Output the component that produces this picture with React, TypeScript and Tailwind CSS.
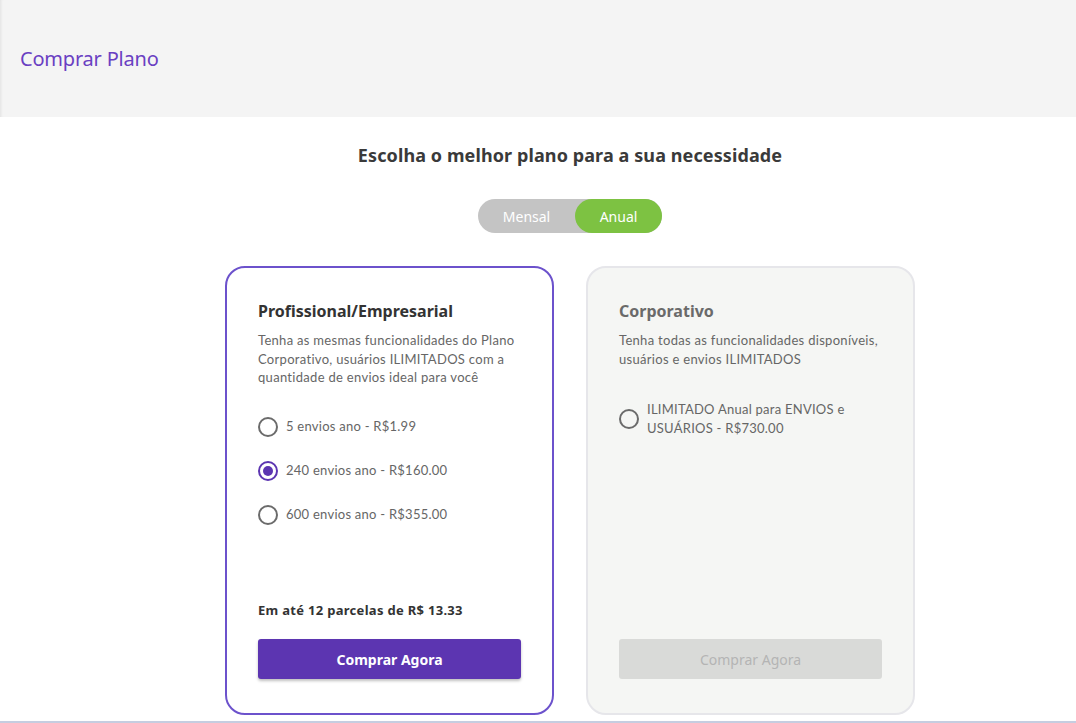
import { useState } from "react";

const font = { fontFamily: "'Noto Sans', Lato, sans-serif" };
const body = { fontFamily: "Lato, 'Noto Sans', sans-serif" };

interface option {
  id: string;
  label: string;
}

const proOptions: option[] = [
  { id: "5", label: "5 envios ano - R$1.99" },
  { id: "240", label: "240 envios ano - R$160.00" },
  { id: "600", label: "600 envios ano - R$355.00" },
];

function Radio({ checked }: { checked: boolean }) {
  return (
    <span
      className={`w-5 h-5 shrink-0 rounded-full border-2 flex items-center justify-center ${
        checked ? "border-[#5c35b1]" : "border-[#6b6b6b]"
      }`}
    >
      {checked && <span className="w-[10px] h-[10px] rounded-full bg-[#5c35b1]"></span>}
    </span>
  );
}

export default function App() {
  const [anual, setAnual] = useState(true);
  const [selected, setSelected] = useState("240");

  return (
    <div className="min-h-[723px] bg-white flex flex-col text-[#333]" style={font}>
      {/* Header */}
      <div className="h-[117px] bg-[#f4f4f4] flex items-center px-5 shadow-[inset_3px_0_3px_-2px_rgba(0,0,0,0.08)]">
        <h1 className="text-[20px] text-[#6a3fc2] tracking-[-0.2px]">Comprar Plano</h1>
      </div>

      <div className="flex flex-col items-center pl-[64px]">
        <h2 className="mt-[26px] text-[18px] font-bold text-[#3a3a3a] leading-[24px] tracking-[0.1px]">
          Escolha o melhor plano para a sua necessidade
        </h2>

        {/* Toggle */}
        <div className="mt-[32px] flex h-[34px] w-[184px] rounded-full bg-[#c4c4c4] text-white text-[14px]">
          <button
            className={`w-[97px] rounded-full ${!anual ? "bg-[#7dc242]" : ""}`}
            onClick={() => setAnual(false)}
          >
            Mensal
          </button>
          <button
            className={`flex-1 rounded-full ${anual ? "bg-[#7dc242]" : ""}`}
            onClick={() => setAnual(true)}
          >
            Anual
          </button>
        </div>

        {/* Cards */}
        <div className="mt-[33px] flex gap-8">
          <div className="w-[329px] h-[449px] rounded-[20px] border-2 border-[#6c52cc] bg-white px-[31px] pt-[32px] pb-[34px] flex flex-col">
            <h3 className="text-[16px] font-bold text-[#333] leading-[22px]">Profissional/Empresarial</h3>
            <p className="mt-[9px] text-[13px] leading-[18.5px] text-[#666] tracking-[0.3px]" style={body}>
              Tenha as mesmas funcionalidades do Plano Corporativo, usuários ILIMITADOS com a quantidade de envios ideal para você
            </p>
            <div className="mt-[30px] flex flex-col gap-[24px]">
              {proOptions.map((o) => (
                <label
                  key={o.id}
                  className="flex items-center gap-2 cursor-pointer h-[20px]"
                  onClick={() => setSelected(o.id)}
                >
                  <Radio checked={selected === o.id} />
                  <span className="text-[13px] text-[#666] tracking-[0.25px]" style={body}>
                    {o.label}
                  </span>
                </label>
              ))}
            </div>
            <div className="flex-1"></div>
            <p className="text-[13px] font-bold text-[#333] tracking-[0.3px]">Em até 12 parcelas de R$ 13.33</p>
            <button className="mt-[19px] h-[40px] w-full rounded-[3px] bg-[#5c35b1] text-white text-[14px] font-bold shadow-[0_2px_3px_rgba(0,0,0,0.25)]">
              Comprar Agora
            </button>
          </div>

          <div className="w-[329px] h-[449px] rounded-[20px] border-2 border-[#e6e6ea] bg-[#f5f6f4] px-[31px] pt-[32px] pb-[34px] flex flex-col">
            <h3 className="text-[16px] font-bold text-[#6a6a6a] leading-[22px]">Corporativo</h3>
            <p className="mt-[9px] text-[13px] leading-[18.5px] text-[#666] tracking-[0.3px]" style={body}>
              Tenha todas as funcionalidades disponíveis, usuários e envios ILIMITADOS
            </p>
            <div className="mt-[32px] flex items-center gap-2">
              <Radio checked={false} />
              <span className="text-[13px] leading-[18.5px] text-[#666] tracking-[0.25px]" style={body}>
                ILIMITADO Anual para ENVIOS e USUÁRIOS - R$730.00
              </span>
            </div>
            <div className="flex-1"></div>
            <button className="h-[40px] w-full rounded-[3px] bg-[#d9dad8] text-[#b4b4b4] text-[14px]">
              Comprar Agora
            </button>
          </div>
        </div>
      </div>
      <div className="mt-auto h-[2px] bg-[#c6cde0]"></div>
    </div>
  );
}
